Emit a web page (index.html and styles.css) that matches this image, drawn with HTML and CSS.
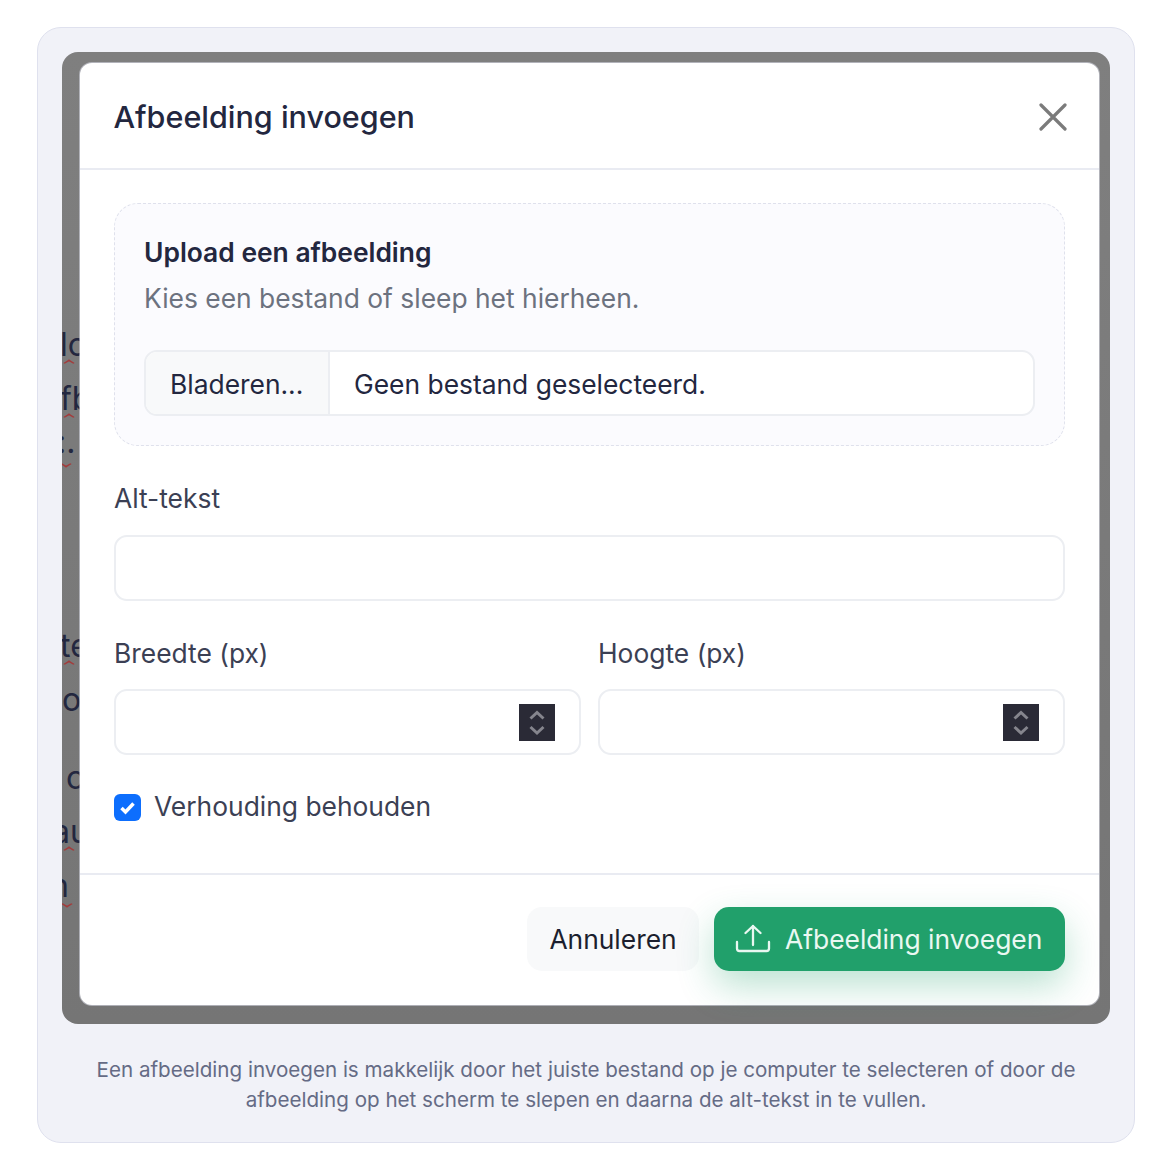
FILE: index.html
```html
<!DOCTYPE html>
<html lang="nl">
<head>
<meta charset="utf-8">
<title>Afbeelding invoegen</title>
<link rel="stylesheet" href="styles.css">
</head>
<body>
<figure class="card">
  <div class="shot">
    <div class="behind" aria-hidden="true">
      <span class="bg-word w1">lo<i class="sq"></i></span>
      <span class="bg-word w2">fb<i class="sq"></i></span>
      <span class="bg-word w3">:.<i class="sq sq-low"></i></span>
      <span class="bg-word w4">te<i class="sq"></i></span>
      <span class="bg-word w5">o</span>
      <span class="bg-word w6">c</span>
      <span class="bg-word w7">au<i class="sq"></i></span>
      <span class="bg-word w8">n<i class="sq sq-low"></i></span>
    </div>
    <section class="modal">
      <header class="modal-head">
        <h2 class="modal-title">Afbeelding invoegen</h2>
        <svg class="close" viewBox="0 0 28 28" width="28" height="28"><path d="M2 2 26 26M26 2 2 26" fill="none" stroke="#7b7b7b" stroke-width="3.200" stroke-linecap="round"/></svg>
      </header>
      <div class="modal-body">
        <div class="drop">
          <div class="drop-title">Upload een afbeelding</div>
          <div class="drop-sub">Kies een bestand of sleep het hierheen.</div>
          <div class="file">
            <span class="file-btn">Bladeren...</span>
            <span class="file-name">Geen bestand geselecteerd.</span>
          </div>
        </div>
        <label class="label label-alt">Alt-tekst</label>
        <div class="input"></div>
        <div class="cols">
          <div class="col">
            <label class="label">Breedte (px)</label>
            <div class="input input-num">
              <span class="spin"><svg viewBox="0 0 36 37" width="36" height="37"><path d="M11.500 14.500 18 8.500l6.500 6M11.500 23 18 29l6.500-6" fill="none" stroke="#85858d" stroke-width="3"/></svg></span>
            </div>
          </div>
          <div class="col">
            <label class="label">Hoogte (px)</label>
            <div class="input input-num">
              <span class="spin"><svg viewBox="0 0 36 37" width="36" height="37"><path d="M11.500 14.500 18 8.500l6.500 6M11.500 23 18 29l6.500-6" fill="none" stroke="#85858d" stroke-width="3"/></svg></span>
            </div>
          </div>
        </div>
        <div class="check-row">
          <span class="check"><svg viewBox="0 0 27 27" width="27" height="27"><path d="M7.500 14l4 4 8-8.500" fill="none" stroke="#fff" stroke-width="3.500"/></svg></span>
          <span class="check-label">Verhouding behouden</span>
        </div>
      </div>
      <footer class="modal-foot">
        <button class="btn btn-ghost">Annuleren</button>
        <button class="btn btn-primary">
          <svg viewBox="0 0 36 30" width="36" height="30"><path d="M2 18v6.500a2.500 2.500 0 0 0 2.500 2.500h27a2.500 2.500 0 0 0 2.500-2.500V18M18 21V2M10.500 9 18 2l7.500 7" fill="none" stroke="#e9f7f1" stroke-width="2.300" stroke-linecap="round" stroke-linejoin="round"/></svg>
          Afbeelding invoegen
        </button>
      </footer>
    </section>
  </div>
  <figcaption class="caption">Een afbeelding invoegen is makkelijk door het juiste bestand op je computer te selecteren of door de afbeelding op het scherm te slepen en daarna de alt-tekst in te vullen.</figcaption>
</figure>
</body>
</html>
```

FILE: styles.css
```css
* { box-sizing: border-box; }
html, body { margin: 0; padding: 0; background: #fff; }
body { font-family: Inter, "Liberation Sans", sans-serif; color: #23273f; }
.card {
  width: 1098px;
  height: 1116px;
  margin: 27px 0 0 37px;
  padding: 24px 24px 0;
  background: #f1f2f8;
  border: 1px solid #dfe1ee;
  border-radius: 24px;
}
.shot {
  position: relative;
  height: 972px;
  padding: 11px 11px 19px 18px;
  background: linear-gradient(#7f7f7f, #757575);
  border-radius: 16px;
  overflow: hidden;
}
.behind { position: absolute; inset: 0; font-size: 32px; color: #23273f; }
.bg-word { position: absolute; left: -2px; line-height: 36px; white-space: nowrap; }
.sq {
  display: block;
  position: absolute;
  left: 5px;
  top: 32px;
  width: 8px;
  height: 8px;
  border-top: 2px solid #a33c3c;
  border-left: 2px solid #a33c3c;
  transform: scaleY(.6) rotate(45deg);
}
.sq-low { top: 46px; left: 3px; transform: scaleY(.6) rotate(225deg); }
.w1 { top: 275px; }
.w2 { top: 329px; }
.w3 { top: 372px; left: -5px; }
.w3 .sq-low { top: 36px; left: 5px; }
.w4 { top: 576px; }
.w5 { top: 630px; left: 0; }
.w6 { top: 708px; left: 4px; }
.w7 { top: 762px; left: -10px; }
.w7 .sq { left: 13px; }
.w8 { top: 816px; left: -12px; }
.w8 .sq-low { top: 32px; left: 13px; }
.modal {
  position: relative;
  display: flex;
  flex-direction: column;
  height: 942px;
  background: #fff;
  border-radius: 12px;
  box-shadow: 0 0 0 1px rgba(220, 222, 235, .55);
}
.modal-head {
  display: flex;
  align-items: center;
  justify-content: space-between;
  height: 107px;
  padding: 2px 32px 0 33.500px;
  border-bottom: 2px solid #e9ebf2;
}
.modal-title { margin: 0; font-size: 30.500px; font-weight: 500; line-height: 36px; color: #23273f; }
.close { display: block; }
.modal-body { padding: 33px 34px 0; flex: 1; }
.drop {
  height: 243px;
  padding: 28px 29px 0;
  background: #fbfbfe;
  border: 1px dashed #dfe1ec;
  border-radius: 24px;
}
.drop-title { font-size: 26.400px; font-weight: 600; line-height: 40px; color: #23273f; }
.drop-sub { margin-top: 6px; font-size: 26.400px; line-height: 40px; color: #6c727f; }
.file {
  display: flex;
  height: 66px;
  margin-top: 32px;
  background: #fff;
  border: 2px solid #eceef2;
  border-radius: 13px;
  overflow: hidden;
  font-size: 26.400px;
  color: #23273f;
}
.file-btn {
  display: flex;
  align-items: center;
  width: 184px;
  padding: 2px 0 0 24px;
  background: #f8f9fa;
  border-right: 2px solid #eceef2;
}
.file-name { display: flex; align-items: center; padding: 2px 0 0 24px; }
.label { display: block; font-size: 26.400px; line-height: 40px; color: #3b4054; }
.label-alt { margin-top: 32px; }
.input {
  height: 66px;
  margin-top: 17px;
  background: #fff;
  border: 2px solid #eceef2;
  border-radius: 13px;
}
.cols { display: grid; grid-template-columns: 467px 467px; gap: 17px; margin-top: 32px; }
.cols .input { margin-top: 16px; }
.input-num { display: flex; align-items: center; justify-content: flex-end; padding-right: 24px; }
.spin { display: block; width: 36px; height: 37px; background: #2a2a36; }
.spin svg, .check svg { display: block; }
.check-row { display: flex; align-items: center; gap: 13px; margin-top: 31px; }
.check { width: 27px; height: 27px; background: #0d6efd; border-radius: 6px; }
.check-label { margin-bottom: 2px; font-size: 26.400px; line-height: 40px; color: #3b4054; }
.modal-foot {
  display: flex;
  justify-content: flex-end;
  gap: 15px;
  height: 132px;
  padding: 32px 34px 0;
  border-top: 2px solid #e9ebf2;
}
.btn {
  display: flex;
  align-items: center;
  height: 64px;
  padding-bottom: 2px;
  border: 0;
  border-radius: 15px;
  font-family: inherit;
  font-size: 26.400px;
  font-weight: 400;
}
.btn-ghost { width: 172px; justify-content: center; background: #f8f9fa; color: #1c1f2e; }
.btn-primary {
  width: 351px;
  gap: 14px;
  padding-left: 21px;
  background: #21a06b;
  color: #eaf8f2;
  box-shadow: 0 15px 36px rgba(33, 160, 107, .3);
}
.caption {
  margin: 31px 0 0;
  padding: 0 20px;
  font-family: Inter, sans-serif;
  font-size: 20.600px;
  line-height: 30px;
  text-align: center;
  color: #656b85;
}
```
